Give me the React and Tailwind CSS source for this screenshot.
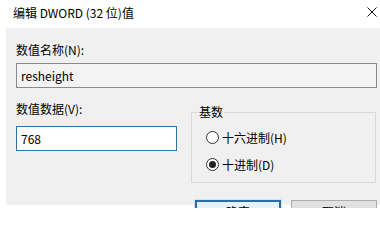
import React from "react";

export default function App() {
  const font = { fontFamily: '"Noto Sans CJK SC", "Noto Sans", sans-serif' };
  return (
    <div className="w-[380px] h-[208px] bg-white overflow-hidden text-[12px] text-black leading-[16px]" style={font}>
      <div className="h-[28px] flex items-center justify-between pl-[13px] pr-[3px]">
        <span className="mb-[2px]">编辑 DWORD (32 位)值</span>
        <svg width="10" height="10" viewBox="0 0 10 10" className="mb-[5px]">
          <path d="M0.5 0.5 L9.5 9.5 M9.5 0.5 L0.5 9.5" stroke="#111" strokeWidth="1" />
        </svg>
      </div>
      <div className="ml-[6px] bg-[#f0f0f0] h-[177px] pl-[10px] pr-[3px] pt-[14px]">
        <div className="h-[16px]">数值名称(N):</div>
        <div className="mt-[5px] h-[25px] border border-[#8a8a8a] bg-[#f3f3f3] flex items-center pl-[4px]">
          resheight
        </div>
        <div className="flex items-start mt-[13px] gap-[14px]">
          <div className="w-[161px] shrink-0">
            <div className="h-[16px]">数值数据(V):</div>
            <div className="mt-[9px] h-[25px] border border-[#2f74a3] bg-white flex items-center pl-[4px]">
              768
            </div>
          </div>
          <div className="relative w-[185px] h-[71px] shrink-0 mt-[11px] border border-[#d9d9d9] pt-[18px] pl-[14px]">
            <span className="absolute -top-[9px] left-[6px] bg-[#f0f0f0] px-[1px]">基数</span>
            <div className="flex items-center h-[13px] gap-[3px]">
              <span className="w-[13px] h-[13px] rounded-full border border-[#333] bg-white"></span>
              <span>十六进制(H)</span>
            </div>
            <div className="flex items-center h-[13px] gap-[3px] mt-[14px]">
              <span className="w-[13px] h-[13px] rounded-full border border-[#333] bg-white flex items-center justify-center">
                <span className="w-[7px] h-[7px] rounded-full bg-[#222]"></span>
              </span>
              <span>十进制(D)</span>
            </div>
          </div>
        </div>
        <div className="flex justify-end gap-[10px] mt-[17px]">
          <div className="w-[86px] h-[24px] shrink-0 border-2 border-[#2a6ea8] bg-[#e5f1fb] shadow-[0_0_0_1px_#cfe6f8] flex items-center justify-center">确定</div>
          <div className="w-[86px] h-[24px] shrink-0 border border-[#adadad] bg-[#e1e1e1] flex items-center justify-center">取消</div>
        </div>
      </div>
    </div>
  );
}
